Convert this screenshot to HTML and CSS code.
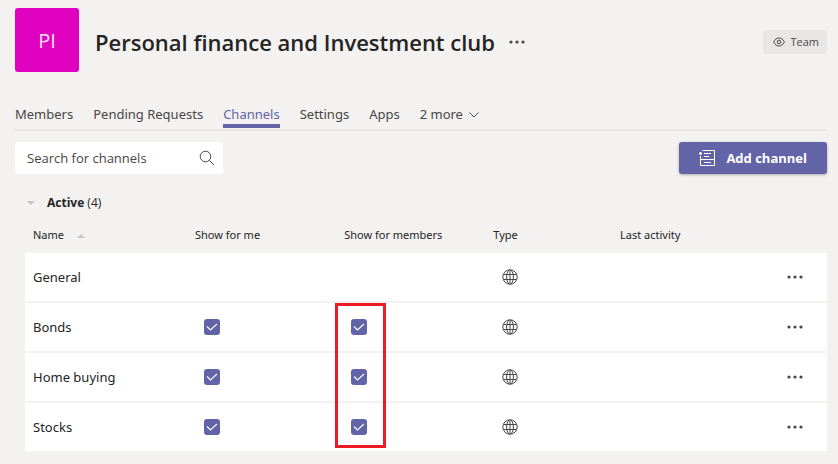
FILE: index.html
```html
<!DOCTYPE html>
<html lang="en">
<head>
<meta charset="utf-8">
<title>Personal finance and Investment club</title>
<link rel="stylesheet" href="styles.css">
</head>
<body>
<svg class="sprite" aria-hidden="true">
  <symbol id="globe" viewBox="0 0 16 16"><g fill="none" stroke="currentColor"><circle cx="8" cy="8" r="7.2"/><path d="M8 .5v15M1.500 5.500h13M1.500 10.500h13"/><path d="M7 1C3.800 4.500 3.800 11.500 7 15M9 1c3.200 3.500 3.200 10.500 0 14"/></g></symbol>
  <symbol id="dots" viewBox="0 0 16 4"><g fill="currentColor"><circle cx="2" cy="2" r="1.600"/><circle cx="8" cy="2" r="1.600"/><circle cx="14" cy="2" r="1.600"/></g></symbol>
  <symbol id="check" viewBox="0 0 16 16"><path d="M3 7.500L6.500 11l6.500-6" fill="none" stroke="#fff" stroke-width="1.100"/></symbol>
</svg>
<header class="team">
  <div class="avatar">PI</div>
  <h1>Personal finance and Investment club</h1>
  <button class="icon-btn title-more" aria-label="More options"><svg class="dots"><use href="#dots"/></svg></button>
  <span class="tag"><svg viewBox="0 0 12 10"><g fill="none" stroke="currentColor"><path d="M.6 5C2 2.200 3.800 1 6 1s4 1.200 5.400 4C10 7.800 8.200 9 6 9S2 7.800.6 5z"/><circle cx="6" cy="5" r="1.800"/></g></svg>Team</span>
</header>
<nav class="tabs">
  <a href="#members">Members</a>
  <a href="#pending">Pending Requests</a>
  <a href="#channels" class="active" aria-current="page">Channels</a>
  <a href="#settings">Settings</a>
  <a href="#apps">Apps</a>
  <button class="more-tabs">2 more<svg viewBox="0 0 10 6"><path d="M.5.5L5 5 9.500.5" fill="none" stroke="currentColor"/></svg></button>
</nav>
<div class="toolbar">
  <div class="search">
    <input type="text" placeholder="Search for channels" aria-label="Search for channels">
    <button class="icon-btn" aria-label="Search"><svg viewBox="0 0 16 16"><g fill="none" stroke="currentColor"><circle cx="6.500" cy="6.500" r="5.300"/><path d="M10.300 10.300l4.700 4.700"/></g></svg></button>
  </div>
  <button class="add"><svg viewBox="0 0 16 16"><g fill="none" stroke="currentColor"><path d="M3.500.5h12v15h-14V6M1.500 9.500h14M5 3.500h7M5 6.500h5M5 12.500h7"/><path d="M0 3.500h3M1.500 2v3" stroke-width="1.300"/></g></svg>Add channel</button>
</div>
<main class="channels">
  <button class="group"><svg viewBox="0 0 8 4"><path d="M0 0h8L4 4z" fill="currentColor"/></svg><span><b>Active</b> (4)</span></button>
  <div class="table-wrap">
    <table>
      <colgroup><col class="c-name"><col class="c-show"><col class="c-show"><col class="c-type"><col class="c-last"><col></colgroup>
      <thead><tr><th>Name<svg class="sort" viewBox="0 0 8 4"><path d="M0 4h8L4 0z" fill="currentColor"/></svg></th><th>Show for me</th><th>Show for members</th><th>Type</th><th>Last activity</th><th></th></tr></thead>
      <tbody>
        <tr><td>General</td><td></td><td></td><td><svg class="globe"><use href="#globe"/></svg></td><td></td><td><button class="icon-btn" aria-label="General options"><svg class="dots"><use href="#dots"/></svg></button></td></tr>
        <tr><td>Bonds</td><td><label class="tick"><input type="checkbox" checked aria-label="Show Bonds for me"><svg><use href="#check"/></svg></label></td><td><label class="tick"><input type="checkbox" checked aria-label="Show Bonds for members"><svg><use href="#check"/></svg></label></td><td><svg class="globe"><use href="#globe"/></svg></td><td></td><td><button class="icon-btn" aria-label="Bonds options"><svg class="dots"><use href="#dots"/></svg></button></td></tr>
        <tr><td>Home buying</td><td><label class="tick"><input type="checkbox" checked aria-label="Show Home buying for me"><svg><use href="#check"/></svg></label></td><td><label class="tick"><input type="checkbox" checked aria-label="Show Home buying for members"><svg><use href="#check"/></svg></label></td><td><svg class="globe"><use href="#globe"/></svg></td><td></td><td><button class="icon-btn" aria-label="Home buying options"><svg class="dots"><use href="#dots"/></svg></button></td></tr>
        <tr><td>Stocks</td><td><label class="tick"><input type="checkbox" checked aria-label="Show Stocks for me"><svg><use href="#check"/></svg></label></td><td><label class="tick"><input type="checkbox" checked aria-label="Show Stocks for members"><svg><use href="#check"/></svg></label></td><td><svg class="globe"><use href="#globe"/></svg></td><td></td><td><button class="icon-btn" aria-label="Stocks options"><svg class="dots"><use href="#dots"/></svg></button></td></tr>
      </tbody>
    </table>
    <div class="highlight"></div>
  </div>
</main>
</body>
</html>
```
FILE: styles.css
```css
* { box-sizing: border-box; }
body {
  margin: 0;
  padding: 8px 11px 12px 15px;
  background: #f3f2f1;
  color: #252423;
  font: 13px/20px "Open Sans", "Noto Sans", sans-serif;
}
button { margin: 0; padding: 0; border: 0; background: none; color: inherit; font: inherit; cursor: pointer; }
svg { display: block; flex: none; }
.sprite { display: none; }
.icon-btn { display: flex; align-items: center; justify-content: center; color: #484644; }
.dots { width: 16px; height: 4px; }

.team { display: flex; align-items: center; height: 64px; }
.avatar {
  display: flex; align-items: center; justify-content: center;
  width: 64px; height: 64px; padding-top: 2px; border-radius: 3px;
  background: #df00c0; color: #fbe0f6; font-size: 20px;
}
h1 { margin: 4px 0 0 16px; font-size: 22px; line-height: 32px; font-weight: 600; white-space: nowrap; }
.title-more { margin: 4px 0 0 14px; }
.tag {
  display: flex; align-items: center; gap: 5px;
  height: 24px; margin: 4px 0 0 auto; padding: 0 8px 0 10px;
  border-radius: 3px; background: #e8e7e6; color: #484644; font-size: 11px;
}
.tag svg { width: 12px; height: 10px; }

.tabs {
  display: flex; gap: 20px; margin-top: 32px;
  border-bottom: 2px solid #e9e8e6; color: #484644;
  font-family: "Noto Sans", sans-serif;
}
.tabs a, .more-tabs { height: 25px; color: inherit; text-decoration: none; white-space: nowrap; }
.tabs .active { color: #6264a7; border-bottom: 4px solid #6264a7; height: 24px; }
.more-tabs { display: flex; gap: 6px; }
.more-tabs svg { width: 10px; height: 6px; margin-top: 8px; }

.toolbar { display: flex; justify-content: space-between; margin-top: 11px; }
.search { display: flex; width: 208px; height: 32px; padding: 0 8px 0 12px; border-radius: 3px; background: #fff; }
.search input { flex: 1; min-width: 0; padding: 0; border: 0; outline: 0; background: none; color: inherit; font: inherit; }
.search input::placeholder { color: #484644; opacity: 1; }
.search svg { width: 16px; height: 16px; }
.add {
  display: flex; align-items: center; gap: 11px; height: 32px; padding: 0 20px;
  border-radius: 3px; background: #6264a7; color: #fff; font-weight: 700;
  box-shadow: 0 1px 3px rgba(0, 0, 0, .3);
}
.add svg { width: 16px; height: 16px; }

.channels { margin: 19px 0 0 10px; }
.group { display: flex; align-items: center; gap: 12px; padding-left: 2px; font-size: 12px; }
.group svg, .sort { width: 8px; height: 4px; color: #c8c6c4; }
.table-wrap { position: relative; }
table { width: 100%; table-layout: fixed; border-spacing: 0; }
.c-name { width: 20.200%; }
.c-show { width: 18.600%; }
.c-type { width: 15.800%; }
.c-last { width: 20.800%; }
th { height: 40px; padding: 4px 8px 0; text-align: left; font-family: "Noto Sans", sans-serif; font-size: 11px; font-weight: 400; white-space: nowrap; }
.sort { display: inline-block; margin-left: 13px; vertical-align: middle; }
td { height: 50px; padding: 0 8px; background: #fff; border-bottom: 2px solid #f3f2f1; }
td:first-child { font-family: "Noto Sans", sans-serif; }
.globe { width: 16px; height: 16px; margin-left: 9px; color: #484644; }
.tick { position: relative; display: block; width: 16px; height: 16px; margin-left: 9px; }
td:nth-child(3) .tick { margin-left: 7px; }
.tick input { appearance: none; display: block; width: 16px; height: 16px; margin: 0; border-radius: 3px; background: #c8c6c4; }
.tick input:checked { background: #6264a7; }
.tick svg { position: absolute; inset: 0; width: 16px; height: 16px; pointer-events: none; }
.highlight { position: absolute; left: 310px; top: 90px; width: 51px; height: 145px; border: 3px solid #ed1c24; pointer-events: none; }
```
